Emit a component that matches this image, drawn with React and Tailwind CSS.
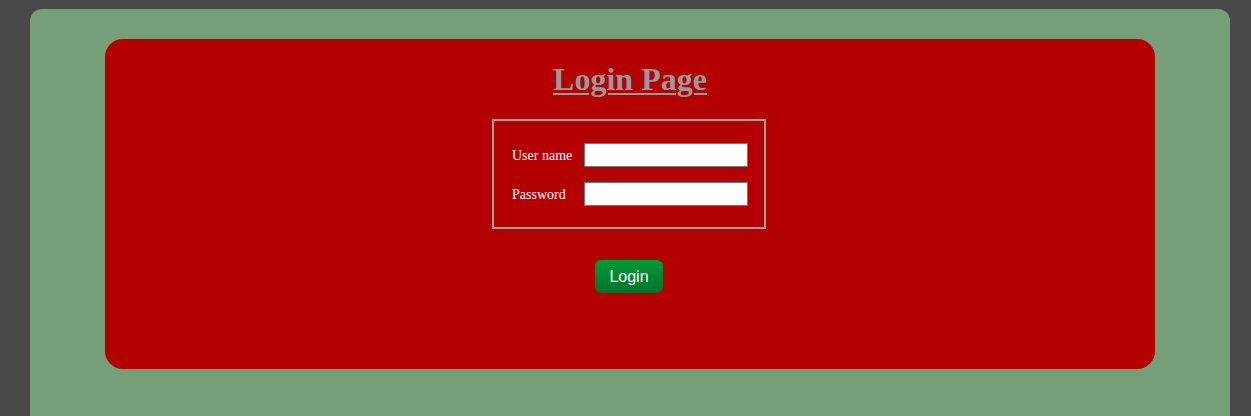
import React from 'react'

const App = () => {
  return (
    <div className="min-h-[416px] bg-[#484848] pt-[9px] pl-[30px] pr-[21px] overflow-hidden" style={{ fontFamily: '"Liberation Serif", serif' }}>
      <div className="bg-[#769e77] rounded-t-[12px] h-[420px] pt-[30px] px-[75px]">
        <div className="bg-[#b30000] rounded-[18px] h-[330px] flex flex-col items-center pt-[22px]">
          <h1 className="text-[32px] leading-[37px] font-bold text-[#999999] underline decoration-2 underline-offset-[3px]">
            Login Page
          </h1>
          <div className="mt-[21px] -ml-[2px] border-2 border-[#a0a0a0] w-[274px] h-[110px] pt-[22px] pl-[18px]">
            <div className="flex items-center h-[24px]">
              <label className="text-white text-[14px] w-[72px]">User name</label>
              <input type="text" className="bg-white border border-[#767676] w-[164px] h-[24px]" />
            </div>
            <div className="flex items-center h-[24px] mt-[15px]">
              <label className="text-white text-[14px] w-[72px]">Password</label>
              <input type="password" className="bg-white border border-[#767676] w-[164px] h-[24px]" />
            </div>
          </div>
          <button
            className="mt-[31px] -ml-[2px] w-[68px] h-[33px] rounded-[6px] bg-gradient-to-b from-[#00993a] to-[#00732a] text-white text-[16px]"
            style={{ fontFamily: '"Liberation Sans", Arial, sans-serif' }}
          >
            Login
          </button>
        </div>
      </div>
    </div>
  )
}

export default App
